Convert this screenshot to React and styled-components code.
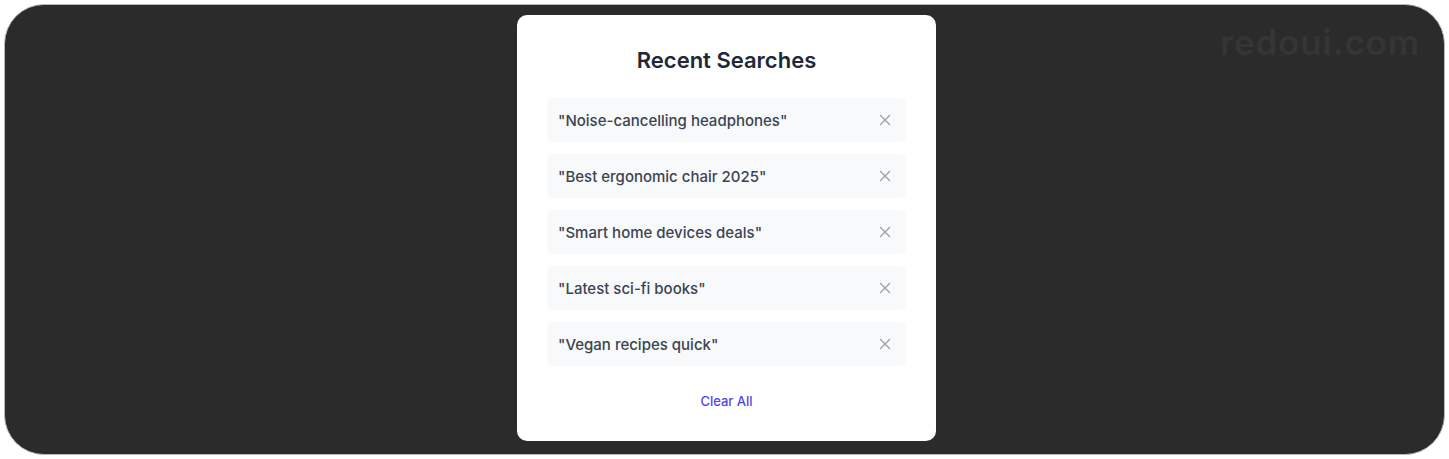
import React from 'react';
import styled, { createGlobalStyle } from 'styled-components';
import { X } from 'lucide-react';

const GlobalStyle = createGlobalStyle`
  html, body {
    margin: 0;
    padding: 0;
    background: #ffffff;
  }
  body {
    font-family: Inter, "Noto Sans", "Liberation Sans", sans-serif;
  }
`;

const Page = styled.div`
  padding: 4px;
  height: 459px;
  box-sizing: border-box;
`;

const Stage = styled.div`
  position: relative;
  height: 100%;
  box-sizing: border-box;
  background: #2b2b2b;
  border: 1px solid #b8b8b8;
  border-radius: 40px;
  display: flex;
  justify-content: center;
  align-items: flex-start;
  padding: 10px 0 0 4px;
  overflow: hidden;
`;

const Watermark = styled.div`
  position: absolute;
  top: 16px;
  right: 24px;
  font-family: Inter, "Noto Sans", sans-serif;
  font-size: 35px;
  font-weight: 600;
  letter-spacing: 0.8px;
  color: #353535;
  user-select: none;
`;

const Card = styled.div`
  width: 419px;
  box-sizing: border-box;
  background: #ffffff;
  border-radius: 10px;
  padding: 31px 30px 30px;
  display: flex;
  flex-direction: column;
`;

const Title = styled.h2`
  margin: 0 0 24px;
  text-align: center;
  font-size: 22px;
  line-height: 28px;
  font-weight: 600;
  color: #1f2937;
`;

const List = styled.ul`
  list-style: none;
  margin: 0;
  padding: 0;
  display: flex;
  flex-direction: column;
  gap: 12px;
`;

const Item = styled.li`
  height: 44px;
  box-sizing: border-box;
  display: flex;
  align-items: center;
  justify-content: space-between;
  padding: 0 12px 0 11px;
  background: #f8f9fb;
  border-radius: 7px;
`;

const Query = styled.span`
  font-size: 15px;
  font-weight: 500;
  color: #3b4452;
`;

const Remove = styled.button`
  border: 0;
  background: none;
  padding: 0;
  display: flex;
  color: #9ca3af;
  cursor: pointer;
`;

const ClearAll = styled.button`
  align-self: center;
  margin-top: 25px;
  border: 0;
  background: none;
  padding: 0;
  font-family: inherit;
  font-size: 13px;
  line-height: 20px;
  font-weight: 500;
  color: #4f46e5;
  cursor: pointer;
`;

const searches = [
  '"Noise-cancelling headphones"',
  '"Best ergonomic chair 2025"',
  '"Smart home devices deals"',
  '"Latest sci-fi books"',
  '"Vegan recipes quick"',
];

export default function App() {
  return (
    <>
      <GlobalStyle />
      <Page>
        <Stage>
          <Watermark>redoui.com</Watermark>
          <Card>
            <Title>Recent Searches</Title>
            <List>
              {searches.map((s) => (
                <Item key={s}>
                  <Query>{s}</Query>
                  <Remove aria-label="Remove">
                    <X size={18} strokeWidth={1.8} />
                  </Remove>
                </Item>
              ))}
            </List>
            <ClearAll>Clear All</ClearAll>
          </Card>
        </Stage>
      </Page>
    </>
  );
}
